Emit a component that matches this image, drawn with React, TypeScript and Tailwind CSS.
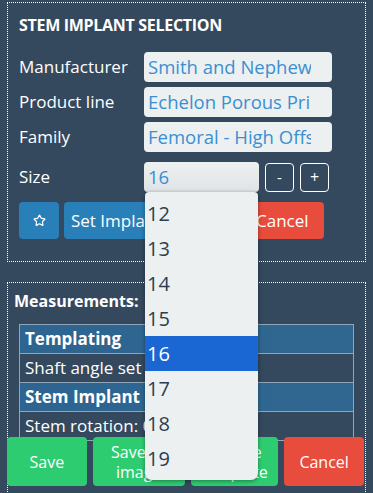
import { Star } from "lucide-react";

const fields = [
  { label: "Manufacturer", value: "Smith and Nephew" },
  { label: "Product line", value: "Echelon Porous Primary" },
  { label: "Family", value: "Femoral - High Offset" },
];

const sizes = ["12", "13", "14", "15", "16", "17", "18", "19"];

export default function App() {
  return (
    <div
      className="relative h-[493px] w-[373px] overflow-hidden bg-[#34495e] text-white"
      style={{ fontFamily: '"Open Sans", "Liberation Sans", sans-serif' }}
    >
      {/* Selection panel */}
      <div className="mx-[7px] mt-[2px] h-[260px] border border-dotted border-white px-[11px] pt-[12px]">
        <h2 className="text-[16px] font-bold leading-[20px] tracking-[-0.3px]">STEM IMPLANT SELECTION</h2>

        <div className="mt-[17px] flex flex-col gap-[5px]">
          {fields.map((f) => (
            <div key={f.label} className="flex items-center">
              <span className="w-[125px] text-[17px] leading-[30px]">{f.label}</span>
              <div className="h-[30px] w-[188px] overflow-hidden whitespace-nowrap rounded-[4px] bg-[#ecf0f1] pl-[4px] pr-[21px] text-[18.5px] leading-[30px] text-[#3a8fd2]">
                <div className="overflow-hidden">{f.value}</div>
              </div>
            </div>
          ))}

          {/* Size row */}
          <div className="relative mt-[5px] flex items-center">
            <span className="w-[125px] text-[17px] leading-[30px]">Size</span>
            <div className="h-[30px] w-[115px] rounded-[4px] bg-gradient-to-b from-[#eef1f2] to-[#dfe3e5] pl-[4px] text-[18.5px] leading-[30px] text-[#3a8fd2]">
              16
            </div>
            <button className="ml-[6px] h-[29px] w-[29px] rounded-[4px] border border-white text-[15px] leading-none">-</button>
            <button className="ml-[6px] h-[29px] w-[29px] rounded-[4px] border border-white text-[16px] leading-none">+</button>

            {/* Open dropdown */}
            <div className="absolute left-[126px] top-[30px] z-20 w-[113px] rounded-b-[7px] rounded-t-[4px] bg-[#ecf0f1] py-[4px] shadow-[0_1px_4px_rgba(0,0,0,0.4)]">
              {sizes.map((s) => (
                <div
                  key={s}
                  className={
                    s === "16"
                      ? "h-[35px] bg-[#1a66d2] pl-[2px] text-[20px] leading-[35px] text-white"
                      : "h-[35px] pl-[2px] text-[20px] leading-[35px] text-[#2c3e50]"
                  }
                >
                  {s}
                </div>
              ))}
            </div>
          </div>
        </div>

        <div className="mt-[10px] flex gap-[5px]">
          <button className="flex h-[37px] w-[40px] items-center justify-center rounded-[4px] bg-[#2980b9]">
            <Star className="h-[13px] w-[13px]" strokeWidth={2.2} />
          </button>
          <button className="h-[37px] w-[180px] rounded-[4px] bg-[#2980b9] pl-[7px] text-left text-[17px]">Set Implant</button>
          <button className="-ml-[5px] h-[37px] w-[80px] rounded-r-[4px] bg-[#e74c3c] pl-[12px] text-left text-[17px]">Cancel</button>
        </div>
      </div>

      {/* Measurements panel */}
      <div className="mx-[7px] mt-[20px] h-[260px] border border-dotted border-white px-[11px] pt-[7px]">
        <h3 className="-ml-[5px] text-[16px] font-bold leading-[22px]">Measurements:</h3>
        <table className="mt-[12px] w-[335px] border-collapse text-[17px]">
          <tbody>
            <tr className="h-[29px] bg-gradient-to-r from-[#2d6590] to-[#2f6791]">
              <td className="border border-[#8fa5b8] px-[5px] font-bold">Templating</td>
            </tr>
            <tr className="h-[29px]">
              <td className="border border-[#8fa5b8] px-[5px]">Shaft angle set</td>
            </tr>
            <tr className="h-[29px] bg-gradient-to-r from-[#2d6590] to-[#2f6791]">
              <td className="border border-[#8fa5b8] px-[5px] font-bold">Stem Implant</td>
            </tr>
            <tr className="h-[29px]">
              <td className="border border-[#8fa5b8] px-[5px]">Stem rotation: 0.0°</td>
            </tr>
          </tbody>
        </table>
      </div>

      {/* Footer buttons */}
      <div className="absolute bottom-[7px] left-[7px] right-[9px] z-10 flex gap-[6px]">
        <button className="h-[49px] flex-1 rounded-[4px] bg-[#2ecc71] text-[16px] leading-[20px]">Save</button>
        <button className="h-[49px] flex-1 rounded-[4px] bg-[#2ecc71] px-[6px] text-[16px] leading-[20px]">Save as image</button>
        <button className="h-[49px] flex-1 rounded-[4px] bg-[#2ecc71] px-[4px] text-[16px] leading-[20px]">Update template</button>
        <button className="h-[49px] flex-1 rounded-[4px] bg-[#e74c3c] text-[16px] leading-[20px]">Cancel</button>
      </div>
    </div>
  );
}
